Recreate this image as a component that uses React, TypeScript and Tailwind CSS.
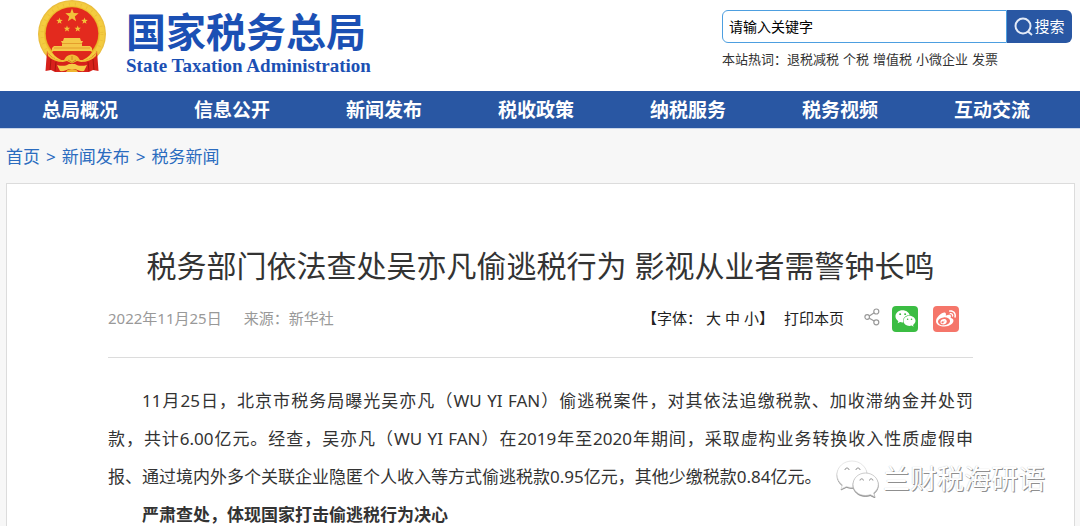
import React from "react";
import { FaWeixin, FaWeibo } from "react-icons/fa";

const NAV = ["总局概况", "信息公开", "新闻发布", "税收政策", "纳税服务", "税务视频", "互动交流"];
const HOT_WORDS = ["退税减税", "个税", "增值税", "小微企业", "发票"];
const CRUMBS = ["首页", "新闻发布", "税务新闻"];

function Star({ x, y, r }: { x: number; y: number; r: number }) {
  const points = Array.from({ length: 10 }, (_, i) => {
    const radius = i % 2 === 0 ? r : r * 0.42;
    const angle = (Math.PI / 5) * i - Math.PI / 2;
    return `${x + radius * Math.cos(angle)},${y + radius * Math.sin(angle)}`;
  }).join(" ");
  return <polygon points={points} fill="#f2c23a" />;
}

function Emblem() {
  return (
    <svg viewBox="0 0 68 73" className="h-[73px] w-[68px] shrink-0" role="img" aria-label="国徽">
      <defs>
        <radialGradient id="gold" cx="50%" cy="50%" r="50%">
          <stop offset="76%" stopColor="#e3a51c" />
          <stop offset="84%" stopColor="#f5cd3f" />
          <stop offset="94%" stopColor="#f3cb40" />
          <stop offset="100%" stopColor="#e6b73a" />
        </radialGradient>
      </defs>
      <circle cx="34" cy="34" r="34" fill="url(#gold)" />
      <circle cx="34" cy="34" r="30" fill="none" stroke="#cf9220" strokeWidth="3" strokeDasharray="1 5" opacity="0.2" />
      <circle cx="34" cy="33.500" r="26.300" fill="#e32a1e" />
      <Star x={34} y={15.5} r={7} />
      <Star x={21.5} y={21} r={3.4} />
      <Star x={46.5} y={21} r={3.4} />
      <Star x={29} y={28.8} r={3.4} />
      <Star x={39.7} y={28.8} r={3.4} />
      <path d="M26 38h16l1 3H25zM23 41h22l-1 2v3h8l2 2v3H14v-3l2-2h8v-3z" fill="#f5c748" />
      <path d="M24 43.500h20M16 48h36" stroke="#dd8d22" strokeWidth="0.700" />
      <path d="M14 52h40c-3 5-8 8-13 9H27c-5-1-10-4-13-9z" fill="#de271c" />
      <path d="M9 51c4 7 11 10 18 10h14c7 0 14-3 18-10l1.500 20-5.500-1-4 2H17l-4-2-5.500 1z" fill="#d7211b" />
      <path d="M13 59l-1 11M55 59l1 11M18 62l-1 9M50 62l1 9" stroke="#a9140f" strokeWidth="1" />
      <path d="M9 51c4 7 10 9.500 17 9l2-3c3-3.500 9-3.500 12 0l2 3c7 .5 13-2 17-9l-1 5c-4 4-9 6-15 6l-4-1-5 2.500-5-2.500-4 1c-6 0-11-2-15-6z" fill="#f0bd35" />
      <path d="M19 65c5 1.500 9 1 12-1h6c3 2 7 2.500 12 1l-3 6c-3 .5-6-.5-9-2h-6c-3 1.500-6 2.500-9 2z" fill="#f6cb47" />
      <path d="M28 72c1-4 11-4 12 0z" fill="#efb52f" />
      <path d="M30 60l4 2.500 4-2.500M34 56v4" fill="none" stroke="#c97a18" strokeWidth="0.800" />
    </svg>
  );
}

function SearchIcon() {
  return (
    <svg viewBox="0 0 20 20" className="size-5" fill="none" stroke="#e3eaf7" strokeWidth="2" aria-hidden="true">
      <circle cx="9" cy="9" r="7.5" />
      <path d="M14 14.5l4 3.5" />
    </svg>
  );
}

function ShareIcon() {
  return (
    <svg viewBox="0 0 16 18" className="h-[18px] w-4" fill="none" stroke="#999" strokeWidth="1.2" aria-hidden="true">
      <circle cx="3.2" cy="9" r="2.3" />
      <circle cx="12.3" cy="3.5" r="2.5" />
      <circle cx="12.3" cy="14.3" r="2.5" />
      <path d="M5.3 8l4.9-3.2M5.3 10.2l4.9 2.9" />
    </svg>
  );
}

function WatermarkIcon() {
  return (
    <svg viewBox="0 0 44 38" className="h-[38px] w-11 shrink-0" aria-hidden="true">
      <g fill="#fff" className="drop-shadow-[0_1px_0_#8b8b8b]">
        <path
          d="M17 1C8.500 1 2 7 2 14.500c0 4.200 2.200 8 5.500 10.500L6 29l5.500-2.600c2 .7 3.500 1 5.500 1 8.500 0 15-6 15-13S25.500 1 17 1z"
          stroke="#dedede"
          strokeWidth="0.700"
        />
      </g>
      <g fill="#fff" className="drop-shadow-[0_1px_0_#8b8b8b]">
        <path
          d="M30.500 13C23.500 13 18 18.200 18 24.500S23.500 35.500 30.500 35.500c1.800 0 3.300-.3 4.800-.8l4.700 2.200-1.300-4c2.900-2.100 4.600-5.100 4.600-8.400C43.300 18.200 37.500 13 30.500 13z"
          stroke="#b9b9b9"
          strokeWidth="0.700"
        />
      </g>
      <path
        d="M10 10c0-2.600 4-2.600 4 0M21 10c0-2.600 4-2.600 4 0M25 20.500c0-2.200 3.400-2.200 3.400 0M34.500 20.500c0-2.200 3.400-2.200 3.400 0"
        fill="none"
        stroke="#8b8b8b"
        strokeWidth="1"
      />
    </svg>
  );
}

export default function App() {
  return (
    <div
      lang="zh-CN"
      className="relative h-screen overflow-hidden bg-[#f7f7f7] font-['Noto_Sans','Noto_Sans_CJK_SC',sans-serif] text-[#333]"
    >
      <header className="flex h-[91px] items-start justify-between bg-white pr-2 pl-[38px]">
        <a href="#home" className="flex gap-5">
          <Emblem />
          <span className="flex flex-col gap-0.5 pt-3 text-[#1b50b4]">
            <span className="text-[40px] leading-10 font-bold">国家税务总局</span>
            <span className="font-['Liberation_Serif',serif] text-[19px] leading-6 font-bold whitespace-nowrap">
              State Taxation Administration
            </span>
          </span>
        </a>
        <div className="w-[350px] pt-2.5">
          <form className="flex h-[33px]" onSubmit={(e) => e.preventDefault()}>
            <input
              type="text"
              aria-label="关键字"
              placeholder="请输入关键字"
              className="min-w-0 flex-1 rounded-l-md border border-[#4d9fe0] bg-white px-1.5 text-sm outline-none placeholder:text-black"
            />
            <button type="submit" className="flex w-[65px] items-center justify-center rounded-r-md bg-[#2957a3] text-[15px] text-white">
              <SearchIcon />
              搜索
            </button>
          </form>
          <div className="flex pt-1.5 text-[13px] leading-5 whitespace-nowrap">
            <span>本站热词：</span>
            <div className="flex gap-1">
              {HOT_WORDS.map((w) => (
                <a key={w} href="#hot">{w}</a>
              ))}
            </div>
          </div>
        </div>
      </header>

      <nav className="grid h-[37px] grid-cols-7 items-center bg-[#2957a3] pt-0.5 pr-3 pl-1">
        {NAV.map((n) => (
          <a key={n} href="#nav" className="text-center text-[19px] font-bold text-white">{n}</a>
        ))}
      </nav>

      <div className="flex h-[55px] items-center gap-1.5 border-t border-[#c9d5e8] px-1.5 pt-0.5 text-[17px] text-[#2b6cbf]">
        {CRUMBS.map((c, i) => (
          <React.Fragment key={c}>
            {i > 0 && <span>&gt;</span>}
            <a href="#crumb">{c}</a>
          </React.Fragment>
        ))}
      </div>

      <main className="mr-[5px] ml-1.5 border border-[#dcdcdc] bg-white px-[101px] pt-[60px] pb-10">
        <h1 className="text-center text-[30px] leading-[44px] whitespace-nowrap">
          税务部门依法查处吴亦凡偷逃税行为 影视从业者需警钟长鸣
        </h1>
        <div className="mt-2 flex h-[62px] items-center justify-between border-b border-[#dcdcdc] pb-4 text-[15px]">
          <div className="flex gap-[22px] text-[#999]">
            <span>2022年11月25日</span>
            <span>来源：新华社</span>
          </div>
          <div className="flex items-center pr-3.5 text-[#222]">
            <div className="flex gap-1">
              <span>【字体：</span>
              <button type="button">大</button>
              <button type="button">中</button>
              <span><button type="button">小</button>】</span>
            </div>
            <button type="button" className="ml-2.5">打印本页</button>
            <button type="button" aria-label="分享" className="ml-5 pb-1"><ShareIcon /></button>
            <button type="button" aria-label="微信" className="ml-3 flex size-[26px] items-center justify-center rounded-sm bg-[#3bbd43] text-white">
              <FaWeixin size={21} />
            </button>
            <button type="button" aria-label="微博" className="ml-[15px] flex size-[26px] items-center justify-center rounded-sm bg-[#f5766a] text-white">
              <FaWeibo size={20} />
            </button>
          </div>
        </div>
        <article className="mt-6 text-[17px] leading-[38px]">
          <p>
            <span className="block indent-[34px] [text-align-last:justify]">
              11月25日，北京市税务局曝光吴亦凡（WU YI FAN）偷逃税案件，对其依法追缴税款、加收滞纳金并处罚
            </span>
            <span className="block [text-align-last:justify]">
              款，共计6.00亿元。经查，吴亦凡（WU YI FAN）在2019年至2020年期间，采取虚构业务转换收入性质虚假申
            </span>
            <span className="block">
              报、通过境内外多个关联企业隐匿个人收入等方式偷逃税款0.95亿元，其他少缴税款0.84亿元。
            </span>
          </p>
          <p className="indent-[34px] font-bold">严肃查处，体现国家打击偷逃税行为决心</p>
        </article>
      </main>

      <div className="absolute right-[35px] bottom-[28px] flex items-center gap-1">
        <WatermarkIcon />
        <span className="text-[27px] leading-9 text-white [text-shadow:1px_1px_0_#8f8f8f,0_0_1px_#bbb]">兰财税海研语</span>
      </div>
    </div>
  );
}
